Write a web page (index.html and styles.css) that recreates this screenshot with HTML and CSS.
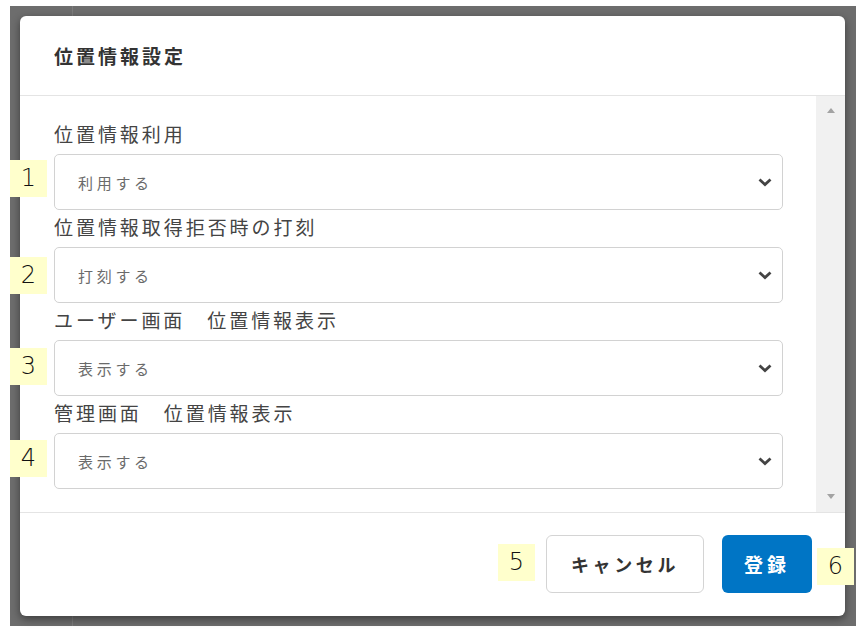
FILE: index.html
```html
<!DOCTYPE html>
<html lang="ja">
  <head>
    <meta charset="UTF-8" />
    <meta name="viewport" content="width=device-width, initial-scale=1.0" />
    <title>位置情報設定</title>
    <link rel="stylesheet" href="styles.css">
  </head>
  <body>
    <div class="screen">
      <div class="modal">
        <div class="modal-header">
          <h2 class="modal-title">位置情報設定</h2>
        </div>

        <div class="modal-body">
          <div class="modal-content">
            <div class="form-group">
              <label>位置情報利用</label>
              <div class="select">
                <span>利用する</span>
                <svg class="chevron" width="16" height="10" viewBox="0 0 16 10"><polyline points="2.5,2.5 8,7.5 13.5,2.5" /></svg>
              </div>
            </div>

            <div class="form-group">
              <label>位置情報取得拒否時の打刻</label>
              <div class="select">
                <span>打刻する</span>
                <svg class="chevron" width="16" height="10" viewBox="0 0 16 10"><polyline points="2.5,2.5 8,7.5 13.5,2.5" /></svg>
              </div>
            </div>

            <div class="form-group">
              <label>ユーザー画面　位置情報表示</label>
              <div class="select">
                <span>表示する</span>
                <svg class="chevron" width="16" height="10" viewBox="0 0 16 10"><polyline points="2.5,2.5 8,7.5 13.5,2.5" /></svg>
              </div>
            </div>

            <div class="form-group">
              <label>管理画面　位置情報表示</label>
              <div class="select">
                <span>表示する</span>
                <svg class="chevron" width="16" height="10" viewBox="0 0 16 10"><polyline points="2.5,2.5 8,7.5 13.5,2.5" /></svg>
              </div>
            </div>
          </div>

          <div class="scrollbar">
            <span class="arrow-up"></span>
            <span class="arrow-down"></span>
          </div>
        </div>

        <div class="modal-footer">
          <button class="btn btn-cancel">キャンセル</button>
          <button class="btn btn-primary">登録</button>
        </div>
      </div>
    </div>

    <!-- annotation markers -->
    <span class="marker m1">1</span>
    <span class="marker m2">2</span>
    <span class="marker m3">3</span>
    <span class="marker m4">4</span>
    <span class="marker m5">5</span>
    <span class="marker m6">6</span>
  </body>
</html>
```

FILE: styles.css
```css
body {
  margin: 0;
  background: #fff;
  font-family: "Noto Sans CJK JP", "Noto Sans", sans-serif;
  position: relative;
  width: 864px;
  height: 636px;
  overflow: hidden;
}
.screen {
  margin: 6px 8px 0 10px;
  width: 846px;
  height: 620px;
  box-sizing: border-box;
  padding: 10px 11px 0 10px;
  background: linear-gradient(to right, transparent 62px, #7c7c7c 62px, #7c7c7c 63px, transparent 63px), #6d6d6d;
}
.modal {
  width: 825px;
  height: 600px;
  background: #fff;
  border-radius: 6px;
  box-shadow: 0 3px 8px rgba(0, 0, 0, 0.45);
  display: flex;
  flex-direction: column;
  overflow: hidden;
}
.modal-header {
  height: 80px;
  box-sizing: border-box;
  border-bottom: 1px solid #e4e4e4;
  display: flex;
  align-items: center;
  padding: 0 0 1px 34px;
}
.modal-title {
  margin: 0;
  font-size: 19px;
  font-weight: bold;
  letter-spacing: 3px;
  color: #333;
}
.modal-body {
  height: 417px;
  box-sizing: border-box;
  border-bottom: 1px solid #e4e4e4;
  display: flex;
}
.modal-content {
  flex: 1;
  padding: 26px 33px 0 34px;
}
.form-group {
  margin-bottom: 5px;
}
label {
  display: block;
  height: 24px;
  line-height: 24px;
  margin-bottom: 8px;
  font-size: 19px;
  letter-spacing: 2.95px;
  color: #444;
  white-space: nowrap;
}
.select {
  height: 56px;
  box-sizing: border-box;
  border: 1px solid #d2d2d2;
  border-radius: 5px;
  display: flex;
  align-items: center;
  justify-content: space-between;
  padding: 0 9px 0 23px;
  font-size: 15px;
  letter-spacing: 3.7px;
  color: #6a6a6a;
}
.chevron polyline {
  fill: none;
  stroke: #444;
  stroke-width: 2.8;
}
.scrollbar {
  width: 29px;
  background: #f1f1f1;
  display: flex;
  flex-direction: column;
  justify-content: space-between;
  align-items: center;
  padding: 12px 0 13px;
  box-sizing: border-box;
}
.arrow-up,
.arrow-down {
  width: 0;
  height: 0;
  border-left: 4px solid transparent;
  border-right: 4px solid transparent;
}
.arrow-up {
  border-bottom: 5px solid #a3a3a3;
}
.arrow-down {
  border-top: 5px solid #a3a3a3;
}
.modal-footer {
  flex: 1;
  display: flex;
  justify-content: flex-end;
  align-items: center;
  gap: 18px;
  padding: 0 33px 2px 0;
}
.btn {
  height: 58px;
  border-radius: 6px;
  font-family: inherit;
  font-size: 18px;
  font-weight: bold;
  letter-spacing: 3.6px;
  cursor: pointer;
}
.btn-cancel {
  width: 158px;
  background: #fff;
  border: 1px solid #d4d4d4;
  color: #333;
}
.btn-primary {
  width: 90px;
  background: #0075c5;
  border: none;
  color: #fff;
  font-size: 19px;
  letter-spacing: 4px;
}
.marker {
  position: absolute;
  width: 37px;
  height: 37px;
  background: #ffffcc;
  font-family: "DejaVu Sans", sans-serif;
  font-weight: 200;
  font-size: 24px;
  line-height: 37px;
  text-align: center;
  color: #111;
}
.m1 { left: 10px; top: 160px; }
.m2 { left: 10px; top: 257px; }
.m3 { left: 10px; top: 348px; }
.m4 { left: 10px; top: 440px; }
.m5 { left: 498px; top: 544px; }
.m6 { left: 817px; top: 548px; }
```
